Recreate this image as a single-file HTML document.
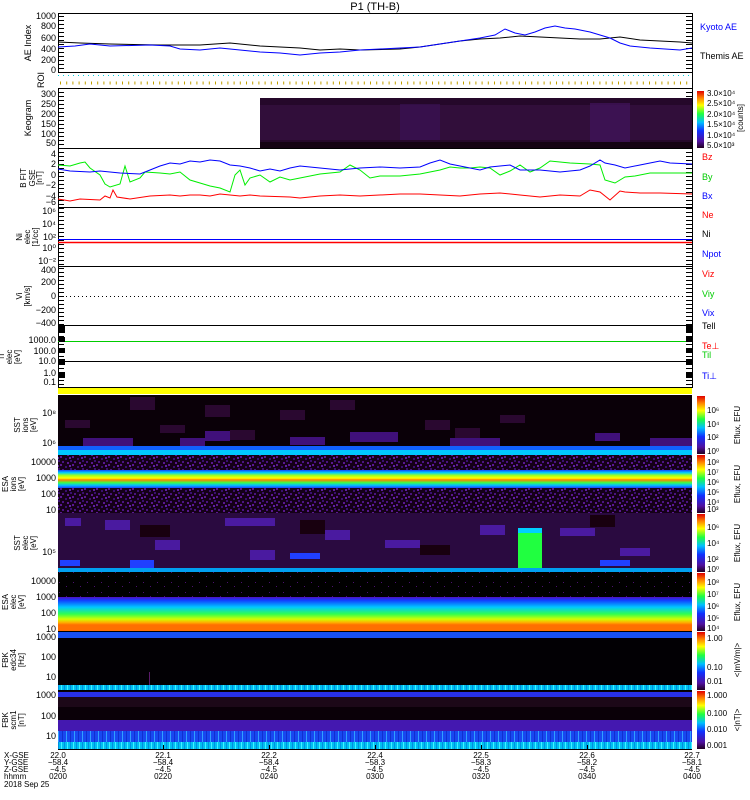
<!DOCTYPE html>
<html><head><meta charset="utf-8"><style>
html,body{margin:0;padding:0;background:#fff;}
svg{display:block;font-family:"Liberation Sans",sans-serif;}
</style></head><body>
<svg width="750" height="800" viewBox="0 0 750 800" xmlns="http://www.w3.org/2000/svg">
<defs>
<linearGradient id="cb" x1="0" y1="1" x2="0" y2="0">
<stop offset="0" stop-color="#200020"/><stop offset="0.12" stop-color="#5010a0"/><stop offset="0.3" stop-color="#1030ff"/><stop offset="0.45" stop-color="#00c0ff"/><stop offset="0.6" stop-color="#20ff40"/><stop offset="0.75" stop-color="#ffff00"/><stop offset="0.88" stop-color="#ff8000"/><stop offset="1" stop-color="#e00000"/>
</linearGradient>
<linearGradient id="esai" x1="0" y1="0" x2="0" y2="1">
<stop offset="0" stop-color="#1040ff"/><stop offset="0.15" stop-color="#00d0ff"/><stop offset="0.3" stop-color="#a0ff20"/><stop offset="0.45" stop-color="#ffff00"/><stop offset="0.55" stop-color="#ff8000"/><stop offset="0.7" stop-color="#40ff40"/><stop offset="0.85" stop-color="#00c0ff"/><stop offset="1" stop-color="#2040ff"/>
</linearGradient>
<linearGradient id="esae" x1="0" y1="0" x2="0" y2="1">
<stop offset="0" stop-color="#5010c0"/><stop offset="0.1" stop-color="#1040ff"/><stop offset="0.3" stop-color="#00c8ff"/><stop offset="0.5" stop-color="#30ff50"/><stop offset="0.65" stop-color="#d0ff00"/><stop offset="0.75" stop-color="#ffb000"/><stop offset="0.82" stop-color="#ff7000"/><stop offset="1" stop-color="#ff7000"/>
</linearGradient>
<pattern id="noise" width="12" height="8" patternUnits="userSpaceOnUse">
<rect width="12" height="8" fill="#150018"/>
<rect x="0" y="0" width="2" height="2" fill="#5a1890"/><rect x="5" y="2" width="2" height="2" fill="#3a1070"/><rect x="9" y="1" width="2" height="2" fill="#6020a0"/><rect x="2" y="5" width="2" height="2" fill="#4a1480"/><rect x="7" y="6" width="2" height="2" fill="#5a1890"/><rect x="10" y="4" width="2" height="2" fill="#3a1070"/>
</pattern>
<pattern id="noise2" width="14" height="10" patternUnits="userSpaceOnUse">
<rect width="14" height="10" fill="#000"/>
<rect x="3" y="2" width="1" height="1" fill="#4a1070"/><rect x="10" y="6" width="1" height="1" fill="#4a1070"/>
</pattern>
<pattern id="cyan" width="6" height="6" patternUnits="userSpaceOnUse">
<rect width="6" height="6" fill="#00c0f0"/><rect x="1" width="1" height="6" fill="#40f0ff"/><rect x="4" width="1" height="6" fill="#0090e0"/>
</pattern>
<pattern id="blu" width="8" height="6" patternUnits="userSpaceOnUse">
<rect width="8" height="6" fill="#1848f0"/><rect x="2" width="1" height="6" fill="#30a0ff"/><rect x="6" width="1" height="6" fill="#1030d0"/>
</pattern>
<pattern id="tk" width="6" height="4" patternUnits="userSpaceOnUse">
<rect y="0" width="6" height="1" fill="#000"/>
</pattern>
</defs>
<rect width="750" height="800" fill="#fff"/>
<text x="375" y="10" font-size="11" text-anchor="middle">P1 (TH-B)</text>

<!-- minor ticks -->
<rect x="58" y="14" width="6" height="373" fill="url(#tk)"/>
<rect x="686" y="14" width="6" height="373" fill="url(#tk)"/>

<!-- Panel frames -->
<g stroke="#000" fill="none" stroke-width="1">
<rect x="58.5" y="13.5" width="634" height="374"/>
<line x1="58" y1="72.5" x2="692" y2="72.5"/><line x1="58" y1="88.5" x2="692" y2="88.5"/>
<line x1="58" y1="148.5" x2="692" y2="148.5"/><line x1="58" y1="207.5" x2="692" y2="207.5"/>
<line x1="58" y1="266.5" x2="692" y2="266.5"/><line x1="58" y1="325.5" x2="692" y2="325.5"/>
</g>

<!-- AE -->
<g font-size="9" text-anchor="end">
<text x="56" y="19">1000</text><text x="56" y="29">800</text><text x="56" y="41">600</text><text x="56" y="52">400</text><text x="56" y="63">200</text><text x="56" y="73">0</text>
</g>
<text transform="translate(31,43) rotate(-90)" font-size="9" text-anchor="middle">AE Index</text>
<polyline fill="none" stroke="#000" points="58,42 80,43 110,44 160,45 200,45 230,43 260,46 300,48 320,50 340,49 360,50 400,49 420,47 440,44 460,41 480,39 500,38 520,36 540,37 560,38 580,39 600,39 620,37 640,40 660,41 680,42 692,43"/>
<polyline fill="none" stroke="#0000ff" points="58,47 75,46 90,44 110,46 150,45 170,46 180,49 200,50 220,48 240,50 260,52 280,53 300,55 320,53 340,52 360,50 380,49 400,48 420,47 440,44 460,41 480,38 495,35 505,29 515,33 525,35 535,32 545,28 555,26 565,28 575,29 590,32 610,38 620,43 630,46 650,48 680,50 692,48"/>
<text x="700" y="30" font-size="9" fill="#0000ff">Kyoto AE</text>
<text x="700" y="59" font-size="9">Themis AE</text>

<!-- ROI -->
<rect x="58" y="73" width="634" height="15" fill="#fff"/>
<line x1="58" y1="75.5" x2="692" y2="75.5" stroke="#00d0e0" stroke-dasharray="1,4"/>
<line x1="60" y1="83" x2="692" y2="83" stroke="#c0a000" stroke-width="3" stroke-dasharray="1,5.2"/>
<text transform="translate(44,80) rotate(-90)" font-size="9" text-anchor="middle">ROI</text>

<!-- Keogram -->
<g font-size="9" text-anchor="end">
<text x="56" y="97">300</text><text x="56" y="107">250</text><text x="56" y="117">200</text><text x="56" y="127">150</text><text x="56" y="137">100</text><text x="56" y="146">50</text>
</g>
<text transform="translate(31,118) rotate(-90)" font-size="9" text-anchor="middle">Keogram</text>
<rect x="260" y="98" width="432" height="50" fill="#25082a"/>
<rect x="260" y="105" width="432" height="35" fill="#34103f" opacity="0.8"/>
<rect x="590" y="103" width="40" height="40" fill="#42145c" opacity="0.7"/>
<rect x="400" y="104" width="40" height="36" fill="#3c1258" opacity="0.6"/>
<rect x="260" y="142" width="432" height="6" fill="#140312"/>
<rect x="697" y="91" width="7" height="57" fill="url(#cb)"/>
<g font-size="8"><text x="707" y="96">3.0×10⁴</text><text x="707" y="106">2.5×10⁴</text><text x="707" y="117">2.0×10⁴</text><text x="707" y="127">1.5×10⁴</text><text x="707" y="138">1.0×10⁴</text><text x="707" y="148">5.0×10³</text></g>
<text transform="translate(743,118) rotate(-90)" font-size="8" text-anchor="middle">[counts]</text>

<!-- B -->
<g font-size="9" text-anchor="end">
<text x="56" y="157">4</text><text x="56" y="167">2</text><text x="56" y="178">0</text><text x="56" y="188">−2</text><text x="56" y="199">−4</text><text x="56" y="205">−6</text>
</g>
<text transform="translate(26,178) rotate(-90)" font-size="8" text-anchor="middle">B FIT</text>
<text transform="translate(35,178) rotate(-90)" font-size="8" text-anchor="middle">GSE</text>
<text transform="translate(42,178) rotate(-90)" font-size="8" text-anchor="middle">[nT]</text>
<polyline fill="none" stroke="#00ee00" points="58,165 70,166 80,163 85,162 90,168 100,175 105,184 110,187 120,184 125,166 130,182 140,178 145,172 160,173 170,174 180,172 190,180 200,183 210,186 220,188 230,192 235,175 240,170 245,185 250,178 260,175 270,182 280,177 290,180 300,178 320,174 340,172 350,165 360,170 370,178 380,176 400,176 420,174 440,170 450,167 460,168 470,168 480,167 490,168 500,175 510,171 520,165 530,172 540,168 550,161 570,163 590,164 600,165 605,180 615,183 625,177 635,176 650,173 670,173 692,173"/>
<polyline fill="none" stroke="#0000ff" points="58,169 70,171 90,172 100,171 120,173 140,174 150,170 160,166 170,163 180,164 190,161 200,162 210,160 220,161 230,165 240,166 250,168 260,171 270,169 280,171 290,168 300,166 320,168 340,170 360,168 380,167 400,168 420,167 430,163 440,160 450,164 460,166 470,168 480,170 490,167 500,166 510,165 520,170 540,170 560,172 580,170 590,166 600,160 605,163 615,165 625,168 640,165 650,163 660,161 670,163 692,164"/>
<polyline fill="none" stroke="#ff0000" points="58,199 70,201 80,199 100,200 105,196 110,198 113,190 117,197 130,199 150,196 170,195 180,196 190,195 200,195 210,196 220,194 240,196 250,195 260,196 290,197 300,198 320,196 340,195 360,196 400,194 420,194 440,195 460,196 480,194 500,193 520,195 540,197 560,195 580,196 590,190 600,192 610,200 620,191 625,192 640,193 660,193 692,194"/>
<text x="702" y="160" font-size="9" fill="#ff0000">Bz</text>
<text x="702" y="180" font-size="9" fill="#00cc00">By</text>
<text x="702" y="199" font-size="9" fill="#0000ff">Bx</text>

<!-- Ni -->
<g font-size="9" text-anchor="end">
<text x="56" y="214">10⁶</text><text x="56" y="227">10⁴</text><text x="56" y="240">10²</text><text x="56" y="251">10⁰</text><text x="56" y="264">10⁻²</text>
</g>
<text transform="translate(22,237) rotate(-90)" font-size="8" text-anchor="middle">Ni</text>
<text transform="translate(30,237) rotate(-90)" font-size="8" text-anchor="middle">elec</text>
<text transform="translate(38,237) rotate(-90)" font-size="8" text-anchor="middle">[1/cc]</text>
<line x1="58" y1="239.5" x2="692" y2="239.5" stroke="#0000ff"/>
<line x1="58" y1="242.5" x2="692" y2="242.5" stroke="#ff0000" stroke-width="1.5"/>
<text x="702" y="218" font-size="9" fill="#ff0000">Ne</text>
<text x="702" y="237" font-size="9">Ni</text>
<text x="702" y="257" font-size="9" fill="#0000ff">Npot</text>

<!-- Vi -->
<g font-size="9" text-anchor="end">
<text x="56" y="273">400</text><text x="56" y="285">200</text><text x="56" y="299">0</text><text x="56" y="313">−200</text><text x="56" y="326">−400</text>
</g>
<text transform="translate(22,296) rotate(-90)" font-size="8" text-anchor="middle">Vi</text>
<text transform="translate(30,296) rotate(-90)" font-size="8" text-anchor="middle">[km/s]</text>
<line x1="62" y1="296.5" x2="692" y2="296.5" stroke="#000" stroke-dasharray="1,3"/>
<text x="702" y="277" font-size="9" fill="#ff0000">Viz</text>
<text x="702" y="297" font-size="9" fill="#00cc00">Viy</text>
<text x="702" y="316" font-size="9" fill="#0000ff">Vix</text>

<!-- Ti -->
<g font-size="9" text-anchor="end">
<text x="56" y="343">1000.0</text><text x="56" y="354">100.0</text><text x="56" y="364">10.0</text><text x="56" y="376">1.0</text><text x="56" y="385">0.1</text>
</g>
<text transform="translate(4,357) rotate(-90)" font-size="8" text-anchor="middle">Ti</text>
<text transform="translate(12,357) rotate(-90)" font-size="8" text-anchor="middle">elec</text>
<text transform="translate(20,357) rotate(-90)" font-size="8" text-anchor="middle">[eV]</text>
<line x1="58" y1="341.5" x2="692" y2="341.5" stroke="#00cc00"/>
<line x1="58" y1="361.5" x2="692" y2="361.5" stroke="#000"/>
<g fill="#000">
<rect x="59" y="326" width="6" height="7"/><rect x="59" y="337" width="6" height="5"/><rect x="59" y="348" width="6" height="5"/><rect x="59" y="359" width="6" height="6"/><rect x="59" y="372" width="6" height="6"/>
<rect x="686" y="326" width="6" height="7"/><rect x="686" y="337" width="6" height="5"/><rect x="686" y="348" width="6" height="5"/><rect x="686" y="359" width="6" height="6"/><rect x="686" y="372" width="6" height="6"/>
</g>
<text x="702" y="329" font-size="9">Tell</text>
<text x="702" y="349" font-size="9" fill="#ff0000">Te⊥</text>
<text x="702" y="358" font-size="9" fill="#00cc00">Til</text>
<text x="702" y="379" font-size="9" fill="#0000ff">Ti⊥</text>

<!-- yellow bar -->
<rect x="58" y="388" width="634" height="6" fill="#ffff00"/>

<!-- SST ion -->
<rect x="58" y="395" width="634" height="60" fill="#0a0008"/>
<g fill="#2a0830">
<rect x="130" y="397" width="25" height="13"/><rect x="205" y="405" width="25" height="12"/><rect x="280" y="410" width="25" height="10"/><rect x="330" y="400" width="25" height="10"/><rect x="425" y="420" width="25" height="10"/><rect x="455" y="428" width="25" height="10"/>
<rect x="65" y="420" width="25" height="8"/><rect x="160" y="425" width="25" height="8"/><rect x="230" y="430" width="25" height="10"/><rect x="500" y="415" width="25" height="8"/>
</g>
<g fill="#40107a">
<rect x="83" y="438" width="50" height="8"/><rect x="180" y="438" width="25" height="8"/><rect x="205" y="431" width="25" height="10"/><rect x="290" y="437" width="35" height="8"/><rect x="350" y="432" width="48" height="10"/><rect x="450" y="438" width="50" height="8"/><rect x="595" y="433" width="25" height="8"/><rect x="650" y="438" width="42" height="8"/>
</g>
<rect x="58" y="446" width="634" height="4" fill="#1060ff"/>
<rect x="58" y="450" width="634" height="5" fill="#00c8ff"/>
<g font-size="9" text-anchor="end"><text x="56" y="416">10⁸</text><text x="56" y="446">10⁶</text></g>
<text transform="translate(20,425) rotate(-90)" font-size="8" text-anchor="middle">SST</text>
<text transform="translate(28,425) rotate(-90)" font-size="8" text-anchor="middle">ions</text>
<text transform="translate(36,425) rotate(-90)" font-size="8" text-anchor="middle">[eV]</text>

<!-- ESA ion -->
<rect x="58" y="455" width="634" height="58" fill="url(#noise)"/>
<rect x="58" y="470" width="634" height="18" fill="url(#esai)"/>
<g font-size="9" text-anchor="end"><text x="56" y="465">10000</text><text x="56" y="481">1000</text><text x="56" y="497">100</text><text x="56" y="513">10</text></g>
<text transform="translate(8,484) rotate(-90)" font-size="8" text-anchor="middle">ESA</text>
<text transform="translate(16,484) rotate(-90)" font-size="8" text-anchor="middle">ions</text>
<text transform="translate(24,484) rotate(-90)" font-size="8" text-anchor="middle">[eV]</text>

<!-- SST elec -->
<rect x="58" y="513" width="634" height="59" fill="#2a0a40"/>
<g fill="#4a1aa0">
<rect x="65" y="518" width="16" height="8"/><rect x="105" y="520" width="25" height="10"/><rect x="155" y="540" width="25" height="10"/><rect x="225" y="518" width="50" height="8"/><rect x="250" y="550" width="25" height="10"/><rect x="325" y="530" width="25" height="10"/><rect x="385" y="540" width="35" height="8"/><rect x="480" y="525" width="25" height="10"/><rect x="560" y="528" width="35" height="8"/><rect x="620" y="548" width="30" height="8"/>
</g>
<g fill="#18000f"><rect x="140" y="525" width="30" height="12"/><rect x="300" y="520" width="25" height="14"/><rect x="420" y="545" width="30" height="10"/><rect x="590" y="515" width="25" height="12"/></g>
<g fill="#2040ff"><rect x="60" y="560" width="20" height="6"/><rect x="130" y="560" width="24" height="8"/><rect x="290" y="553" width="30" height="6"/><rect x="600" y="560" width="30" height="6"/></g>
<rect x="518" y="532" width="24" height="40" fill="#20ff40"/>
<rect x="518" y="528" width="24" height="5" fill="#00d0ff"/>
<rect x="58" y="568" width="634" height="4" fill="#00a0f0"/>
<g font-size="9" text-anchor="end"><text x="56" y="555">10⁵</text></g>
<text transform="translate(20,543) rotate(-90)" font-size="8" text-anchor="middle">SST</text>
<text transform="translate(28,543) rotate(-90)" font-size="8" text-anchor="middle">elec</text>
<text transform="translate(36,543) rotate(-90)" font-size="8" text-anchor="middle">[eV]</text>

<!-- ESA elec -->
<rect x="58" y="572" width="634" height="59" fill="url(#noise2)"/>
<rect x="58" y="597" width="634" height="34" fill="url(#esae)"/>
<g font-size="9" text-anchor="end"><text x="56" y="584">10000</text><text x="56" y="600">1000</text><text x="56" y="616">100</text><text x="56" y="632">10</text></g>
<text transform="translate(8,602) rotate(-90)" font-size="8" text-anchor="middle">ESA</text>
<text transform="translate(16,602) rotate(-90)" font-size="8" text-anchor="middle">elec</text>
<text transform="translate(24,602) rotate(-90)" font-size="8" text-anchor="middle">[eV]</text>
<line x1="58" y1="631.5" x2="692" y2="631.5" stroke="#000"/>

<!-- FBK edc -->
<rect x="58" y="632" width="634" height="58" fill="#020004"/>
<rect x="58" y="632" width="634" height="6" fill="#1850f0"/>
<rect x="58" y="685" width="634" height="5" fill="url(#cyan)"/>
<line x1="149.5" y1="672" x2="149.5" y2="685" stroke="#5a1a6a"/>
<g font-size="9" text-anchor="end"><text x="56" y="640">1000</text><text x="56" y="660">100</text><text x="56" y="680">10</text></g>
<text transform="translate(8,660) rotate(-90)" font-size="8" text-anchor="middle">FBK</text>
<text transform="translate(16,660) rotate(-90)" font-size="8" text-anchor="middle">edc34</text>
<text transform="translate(24,660) rotate(-90)" font-size="8" text-anchor="middle">[Hz]</text>
<line x1="58" y1="690.5" x2="692" y2="690.5" stroke="#000"/>

<!-- FBK scm -->
<rect x="58" y="691" width="634" height="58" fill="#0a0008"/>
<rect x="58" y="692" width="634" height="5" fill="#2830e8"/>
<rect x="58" y="697" width="634" height="10" fill="#1c0818"/>
<rect x="58" y="720" width="634" height="11" fill="#4418b0"/>
<rect x="58" y="731" width="634" height="11" fill="url(#blu)"/>
<rect x="58" y="742" width="634" height="7" fill="url(#cyan)"/>
<g font-size="9" text-anchor="end"><text x="56" y="698">1000</text><text x="56" y="719">100</text><text x="56" y="739">10</text></g>
<text transform="translate(8,720) rotate(-90)" font-size="8" text-anchor="middle">FBK</text>
<text transform="translate(16,720) rotate(-90)" font-size="8" text-anchor="middle">scm1</text>
<text transform="translate(24,720) rotate(-90)" font-size="8" text-anchor="middle">[nT]</text>
<line x1="58" y1="749.5" x2="692" y2="749.5" stroke="#000"/>

<!-- colorbars lower -->
<g>
<rect x="697" y="396" width="8" height="58" fill="url(#cb)"/>
<rect x="697" y="455" width="8" height="58" fill="url(#cb)"/>
<rect x="697" y="514" width="8" height="58" fill="url(#cb)"/>
<rect x="697" y="573" width="8" height="58" fill="url(#cb)"/>
<rect x="697" y="632" width="8" height="58" fill="url(#cb)"/>
<rect x="697" y="691" width="8" height="58" fill="url(#cb)"/>
</g>
<g font-size="8">
<text x="707" y="413">10⁶</text><text x="707" y="427">10⁴</text><text x="707" y="440">10²</text><text x="707" y="454">10⁰</text>
<text x="707" y="465">10⁸</text><text x="707" y="475">10⁷</text><text x="707" y="485">10⁶</text><text x="707" y="495">10⁵</text><text x="707" y="505">10⁴</text><text x="707" y="512">10³</text>
<text x="707" y="530">10⁶</text><text x="707" y="546">10⁴</text><text x="707" y="562">10²</text><text x="707" y="572">10⁰</text>
<text x="707" y="585">10⁸</text><text x="707" y="597">10⁷</text><text x="707" y="609">10⁶</text><text x="707" y="621">10⁵</text><text x="707" y="631">10⁴</text>
<text x="707" y="641">1.00</text><text x="707" y="670">0.10</text><text x="707" y="684">0.01</text>
<text x="707" y="698">1.000</text><text x="707" y="716">0.100</text><text x="707" y="732">0.010</text><text x="707" y="748">0.001</text>
</g>
<g font-size="8" text-anchor="middle">
<text transform="translate(740,425) rotate(-90)">Eflux, EFU</text>
<text transform="translate(740,484) rotate(-90)">Eflux, EFU</text>
<text transform="translate(740,543) rotate(-90)">Eflux, EFU</text>
<text transform="translate(740,602) rotate(-90)">Eflux, EFU</text>
<text transform="translate(740,660) rotate(-90)">&lt;|mV/m|&gt;</text>
<text transform="translate(740,720) rotate(-90)">&lt;|nT|&gt;</text>
</g>

<!-- bottom ticks -->
<g stroke="#000">
<line x1="163.5" y1="745" x2="163.5" y2="749"/><line x1="269.5" y1="745" x2="269.5" y2="749"/><line x1="375.5" y1="745" x2="375.5" y2="749"/><line x1="481.5" y1="745" x2="481.5" y2="749"/><line x1="587.5" y1="745" x2="587.5" y2="749"/>
</g>
<g font-size="8">
<text x="4" y="758">X-GSE</text><text x="4" y="765">Y-GSE</text><text x="4" y="772">Z-GSE</text><text x="4" y="779">hhmm</text><text x="4" y="787">2018 Sep 25</text>
</g>
<g font-size="8" text-anchor="middle">
<text x="58" y="758">22.0</text><text x="58" y="765">−58.4</text><text x="58" y="772">−4.5</text><text x="58" y="779">0200</text>
<text x="163" y="758">22.1</text><text x="163" y="765">−58.4</text><text x="163" y="772">−4.5</text><text x="163" y="779">0220</text>
<text x="269" y="758">22.2</text><text x="269" y="765">−58.4</text><text x="269" y="772">−4.5</text><text x="269" y="779">0240</text>
<text x="375" y="758">22.4</text><text x="375" y="765">−58.3</text><text x="375" y="772">−4.5</text><text x="375" y="779">0300</text>
<text x="481" y="758">22.5</text><text x="481" y="765">−58.3</text><text x="481" y="772">−4.5</text><text x="481" y="779">0320</text>
<text x="587" y="758">22.6</text><text x="587" y="765">−58.2</text><text x="587" y="772">−4.5</text><text x="587" y="779">0340</text>
<text x="692" y="758">22.7</text><text x="692" y="765">−58.1</text><text x="692" y="772">−4.5</text><text x="692" y="779">0400</text>
</g>
</svg>
</body></html>
